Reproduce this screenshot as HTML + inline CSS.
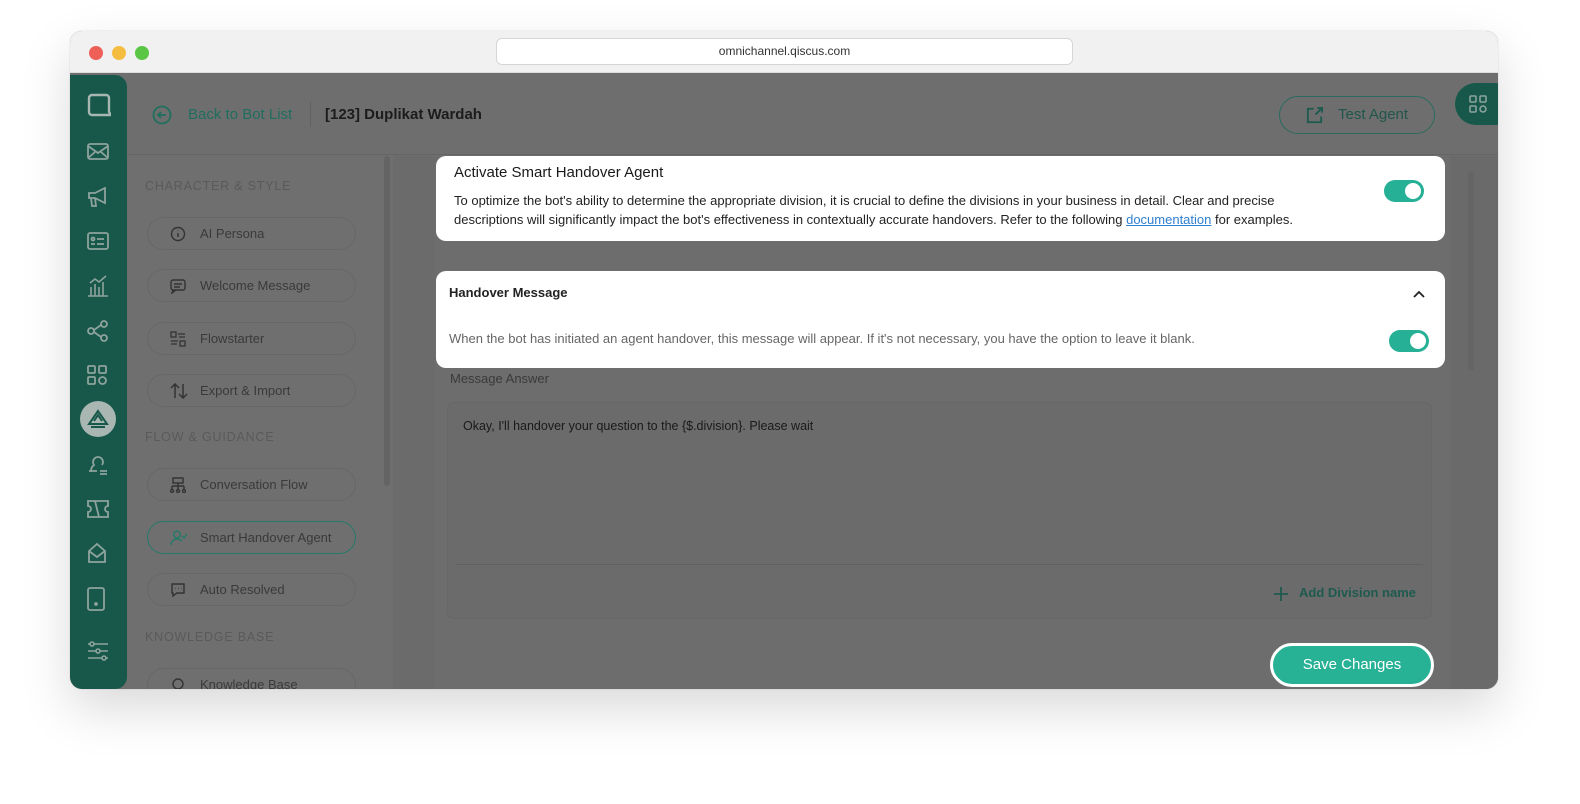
<!DOCTYPE html>
<html><head><meta charset="utf-8"><style>
*{box-sizing:border-box;margin:0;padding:0}
body{width:1580px;height:804px;background:#fff;font-family:"Liberation Sans",sans-serif;position:relative;overflow:hidden}
.win{position:absolute;left:70px;top:31px;width:1428px;height:658px;border-radius:12px;background:#6e6e6e;overflow:hidden;box-shadow:0 20px 50px rgba(0,0,0,.15),0 0 0 1px rgba(0,0,0,.04)}
.title{position:absolute;left:0;top:0;width:100%;height:42px;background:#f1f1f1;border-bottom:1px solid #ddd}
.dot{position:absolute;top:15px;width:14px;height:14px;border-radius:50%}
.url{position:absolute;left:426px;top:7px;width:577px;height:27px;border:1px solid #d6d6d6;border-radius:6px;background:#fff;font-size:12px;color:#333;text-align:center;line-height:25px}
.side{position:absolute;left:0;top:44px;width:57px;height:614px;background:#17584a;border-radius:0 12px 12px 12px}
.side svg{position:absolute;left:17px}
.hdr{position:absolute;left:57px;top:42px;right:0;height:82px;background:#6e6e6e;border-bottom:1px solid #656565}
.nav{position:absolute;left:57px;top:125px;width:266px;height:533px;background:#6f6f6f}
.gut{position:absolute;left:323px;top:125px;width:42px;height:533px;background:#6b6b6b}
.main{position:absolute;left:365px;top:125px;width:1015px;height:533px;background:#6d6d6d}
.rgut{position:absolute;left:1380px;top:125px;width:48px;height:533px;background:#6a6a6a}
.sec{position:absolute;left:75px;font-size:12.5px;color:#5a5a5a;letter-spacing:.8px}
.pill{position:absolute;left:77px;width:209px;height:33px;border:1px solid #676767;border-radius:17px;font-size:13px;color:#3a3a3a;line-height:31px;padding-left:52px}
.pill svg{position:absolute;left:22px;top:8px}
.card{position:absolute;background:#fff;border-radius:10px}
.tog{position:absolute;width:40px;height:22px;border-radius:11px;background:#26b095}
.tog:after{content:"";position:absolute;right:3px;top:3px;width:16px;height:16px;border-radius:50%;background:#fff}
</style></head><body>
<div class="win">
 <div class="title">
  <div class="dot" style="left:19px;background:#ee5f57"></div>
  <div class="dot" style="left:42px;background:#f5bd3f"></div>
  <div class="dot" style="left:65px;background:#5bc645"></div>
  <div class="url">omnichannel.qiscus.com</div>
 </div>
 <div class="hdr">
  <svg style="position:absolute;left:25px;top:32px" width="20" height="20" viewBox="0 0 20 20" fill="none" stroke="#1f6e5e" stroke-width="1.8"><circle cx="10" cy="10" r="8.5"/><path d="M14 10H6M9 7l-3 3 3 3"/></svg>
  <div style="position:absolute;left:61px;top:33px;font-size:15px;color:#1f6e5e">Back to Bot List</div>
  <div style="position:absolute;left:183px;top:28px;width:1px;height:26px;background:#616161"></div>
  <div style="position:absolute;left:198px;top:33px;font-size:15px;color:#1c1c1c;font-weight:bold">[123] Duplikat Wardah</div>
  <div style="position:absolute;left:1152px;top:23px;width:156px;height:38px;border:1px solid #2a6b5e;border-radius:19px;font-size:15px;color:#22564c;line-height:36px;padding-left:58px">Test Agent
   <svg style="position:absolute;left:25px;top:9px" width="19" height="19" viewBox="0 0 20 20" fill="none" stroke="#1f5a4e" stroke-width="2"><path d="M9 3H3v14h14v-6M11 9l7-7M13 2h5v5"/></svg></div>
  <div style="position:absolute;left:1328px;top:10px;width:60px;height:42px;border-radius:21px;background:#17584a"><svg style="position:absolute;left:14px;top:12px" width="18" height="18" viewBox="0 0 18 18" fill="none" stroke="#8aa39c" stroke-width="1.6"><rect x="1" y="1" width="6" height="6" rx="1"/><rect x="11" y="1" width="6" height="6" rx="1"/><rect x="1" y="11" width="6" height="6" rx="1"/><circle cx="14" cy="14" r="3"/></svg></div>
 </div>
 <div class="side">
  <svg style="top:18px" width="24" height="26" viewBox="0 0 24 26" fill="none" stroke="#a6b6b1" stroke-width="2.4"><path d="M5 2h14a3 3 0 0 1 3 3v14l2 3H5a3 3 0 0 1-3-3V5a3 3 0 0 1 3-3z"/></svg>
  <svg style="top:68px" width="22" height="18" viewBox="0 0 22 18" fill="none" stroke="#8ea39d" stroke-width="1.8"><rect x="1" y="1" width="20" height="15" rx="2"/><path d="M1 3l10 7 10-7M1 15l7-6M21 15l-7-6"/></svg>
  <svg style="top:112px" width="22" height="20" viewBox="0 0 22 20" fill="none" stroke="#8ea39d" stroke-width="1.8"><path d="M2 6h6l10-5v15L8 11H2zM4 11l1 8h4l-1-8"/></svg>
  <svg style="top:157px" width="22" height="18" viewBox="0 0 22 18" fill="none" stroke="#8ea39d" stroke-width="1.8"><rect x="1" y="1" width="20" height="16" rx="2"/><circle cx="6" cy="7" r="1.5"/><path d="M10 7h7M4 12h4M10 12h7"/></svg>
  <svg style="top:200px" width="22" height="22" viewBox="0 0 22 22" fill="none" stroke="#8ea39d" stroke-width="1.6"><path d="M1 21h20M4 21V12M8 21V9M12 21V12M16 21V7M3 8l5-4 4 3 7-6"/></svg>
  <svg style="top:245px" width="22" height="22" viewBox="0 0 22 22" fill="none" stroke="#8ea39d" stroke-width="1.8"><circle cx="4" cy="11" r="3"/><circle cx="17" cy="4" r="3"/><circle cx="17" cy="18" r="3"/><path d="M7 10l7-5M7 12l7 5"/></svg>
  <svg style="top:290px" width="20" height="20" viewBox="0 0 20 20" fill="none" stroke="#8ea39d" stroke-width="1.8"><rect x="1" y="1" width="7" height="7" rx="1"/><rect x="12" y="1" width="7" height="7" rx="1"/><rect x="1" y="12" width="7" height="7" rx="1"/><circle cx="15.5" cy="15.5" r="3.5"/></svg>
  <div style="position:absolute;left:10px;top:326px;width:36px;height:36px;border-radius:50%;background:#a9b6b2"><svg style="position:absolute;left:7px;top:8px" width="22" height="20" viewBox="0 0 22 20" fill="none" stroke="#17584a" stroke-width="2"><path d="M11 2L2 15h18zM7 12l4-6 4 6M4 18h14"/></svg></div>
  <svg style="top:378px" width="22" height="22" viewBox="0 0 22 22" fill="none" stroke="#8ea39d" stroke-width="1.8"><path d="M4 18c0-4 2-5 3-6a5 5 0 1 1 8 0M2 18h8M13 18h7M13 21h7"/></svg>
  <svg style="top:425px" width="22" height="18" viewBox="0 0 22 18" fill="none" stroke="#8ea39d" stroke-width="1.8"><path d="M1 1h20v5a3 3 0 0 0 0 6v5H1v-5a3 3 0 0 0 0-6zM8 1l4 16"/></svg>
  <svg style="top:467px" width="20" height="22" viewBox="0 0 20 22" fill="none" stroke="#8ea39d" stroke-width="1.8"><path d="M2 9l8-7 8 7v11H2zM2 9l8 6 8-6"/></svg>
  <svg style="top:512px" width="18" height="24" viewBox="0 0 18 24" fill="none" stroke="#8ea39d" stroke-width="1.8"><rect x="1" y="1" width="16" height="22" rx="2"/><circle cx="9" cy="17" r="1"/></svg>
  <svg style="top:566px" width="22" height="20" viewBox="0 0 22 20" fill="none" stroke="#8ea39d" stroke-width="1.6"><path d="M1 3h20M1 10h20M1 17h20"/><circle cx="5" cy="3" r="2" fill="#17584a"/><circle cx="11" cy="10" r="2" fill="#17584a"/><circle cx="17" cy="17" r="2" fill="#17584a"/></svg>
 </div>
 <div class="nav"></div>
 <div class="gut"><div style="position:absolute;left:-9px;top:0;width:6px;height:330px;border-radius:3px;background:#646464"></div></div>
 <div class="main"></div>
 <div class="rgut"><div style="position:absolute;left:18px;top:15px;width:6px;height:200px;border-radius:3px;background:#656565"></div></div>

 <div class="sec" style="top:148px">CHARACTER &amp; STYLE</div>
 <div class="pill" style="top:186px"><svg width="16" height="16" viewBox="0 0 16 16" fill="none" stroke="#333" stroke-width="1.4"><circle cx="8" cy="8" r="6.5"/><path d="M8 7v4M8 4.5v.5"/></svg>AI Persona</div>
 <div class="pill" style="top:238px"><svg width="16" height="16" viewBox="0 0 16 16" fill="none" stroke="#333" stroke-width="1.4"><rect x="1" y="2" width="14" height="10" rx="2"/><path d="M4 6h8M4 9h6M3 12l-1 3 4-3"/></svg>Welcome Message</div>
 <div class="pill" style="top:291px"><svg width="16" height="16" viewBox="0 0 16 16" fill="none" stroke="#333" stroke-width="1.3"><rect x="1" y="1" width="5" height="5"/><rect x="10" y="10" width="5" height="5"/><path d="M8 3h7M1 10h7M1 13h6M9 6h6"/></svg>Flowstarter</div>
 <div class="pill" style="top:343px"><svg width="18" height="16" viewBox="0 0 18 16" fill="none" stroke="#333" stroke-width="1.5"><path d="M5 15V1M1 5l4-4 4 4M13 1v14M9 11l4 4 4-4"/></svg>Export &amp; Import</div>
 <div class="sec" style="top:399px">FLOW &amp; GUIDANCE</div>
 <div class="pill" style="top:437px"><svg width="16" height="16" viewBox="0 0 16 16" fill="none" stroke="#333" stroke-width="1.4"><rect x="3" y="1" width="10" height="5"/><path d="M8 6v3M2 9h12M2 9v3M8 9v3M14 9v3"/><circle cx="2" cy="14" r="1.5"/><circle cx="8" cy="14" r="1.5"/><circle cx="14" cy="14" r="1.5"/></svg>Conversation Flow</div>
 <div class="pill" style="top:490px;border-color:#247a69"><svg width="18" height="16" viewBox="0 0 18 16" fill="none" stroke="#247a69" stroke-width="1.4"><circle cx="7" cy="4.5" r="3.3"/><path d="M1 15c0-4 3-6 6-6s4 1 5 2M12 6l2 2 3-4"/></svg>Smart Handover Agent</div>
 <div class="pill" style="top:542px"><svg width="16" height="16" viewBox="0 0 16 16" fill="none" stroke="#333" stroke-width="1.4"><path d="M2 2h12v9H7l-4 3v-3H2zM5 6.5h.5M8 6.5h.5M11 6.5h.5"/></svg>Auto Resolved</div>
 <div class="sec" style="top:599px">KNOWLEDGE BASE</div>
 <div class="pill" style="top:637px"><svg width="16" height="16" viewBox="0 0 16 16" fill="none" stroke="#333" stroke-width="1.4"><circle cx="8" cy="7" r="5"/><path d="M6 14h4"/></svg>Knowledge Base</div>

 <div class="card" style="left:366px;top:125px;width:1009px;height:85px">
  <div style="position:absolute;left:18px;top:8px;font-size:15px;color:#1a1a1a">Activate Smart Handover Agent</div>
  <div style="position:absolute;left:18px;top:35px;font-size:13px;color:#222;line-height:19px">To optimize the bot's ability to determine the appropriate division, it is crucial to define the divisions in your business in detail. Clear and precise<br>descriptions will significantly impact the bot's effectiveness in contextually accurate handovers. Refer to the following <span style="color:#2e7fd0;text-decoration:underline">documentation</span> for examples.</div>
  <div class="tog" style="left:948px;top:24px"></div>
 </div>
 <div class="card" style="left:366px;top:240px;width:1009px;height:97px">
  <div style="position:absolute;left:13px;top:14px;font-size:13px;color:#222;font-weight:bold">Handover Message</div>
  <svg style="position:absolute;left:977px;top:19px" width="12" height="8" viewBox="0 0 12 8" fill="none" stroke="#222" stroke-width="1.8"><path d="M1 7l5-5 5 5"/></svg>
  <div style="position:absolute;left:13px;top:60px;font-size:13px;color:#666">When the bot has initiated an agent handover, this message will appear. If it's not necessary, you have the option to leave it blank.</div>
  <div class="tog" style="left:953px;top:59px"></div>
 </div>
 <div style="position:absolute;left:380px;top:340px;font-size:13px;color:#3a3a3a">Message Answer</div>
 <div style="position:absolute;left:378px;top:372px;width:983px;height:215px;border-radius:6px;background:#6b6b6b;box-shadow:0 0 0 1px #676767">
  <div style="position:absolute;left:15px;top:16px;font-size:12.5px;color:#1a1a1a">Okay, I'll handover your question to the {$.division}. Please wait</div>
  <div style="position:absolute;left:8px;right:8px;top:161px;height:1px;background:#606060"></div>
  <div style="position:absolute;left:851px;top:182px;font-size:13px;color:#1f5a4e;font-weight:bold">Add Division name</div>
  <svg style="position:absolute;left:825px;top:183px" width="16" height="16" viewBox="0 0 16 16" stroke="#1f5a4e" stroke-width="1.8"><path d="M8 1v14M1 8h14"/></svg>
 </div>
 <div style="position:absolute;left:1200px;top:612px;width:164px;height:44px;border-radius:22px;background:#27b195;border:3px solid #fff;color:#fff;font-size:15px;text-align:center;line-height:38px">Save Changes</div>
</div>
</body></html>
